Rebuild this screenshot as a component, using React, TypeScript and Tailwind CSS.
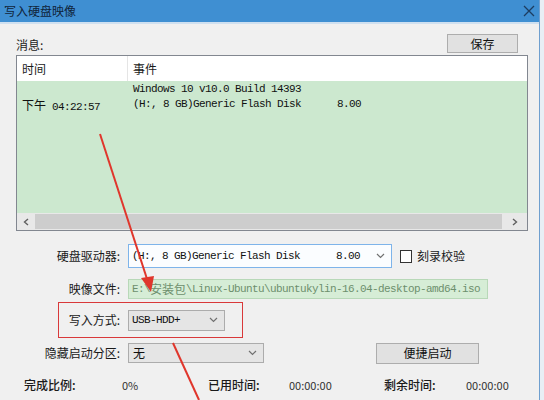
import React from 'react';

const cjk = "font-['Noto_Sans_CJK_SC',sans-serif]";
const mono = "font-['Liberation_Mono','Noto_Sans_CJK_SC',monospace] tracking-[-0.6px]";

function Chevron() {
  return (
    <svg width="9" height="6" viewBox="0 0 9 6" className="shrink-0">
      <path d="M1 1 L4.5 4.5 L8 1" fill="none" stroke="#707070" strokeWidth="1.2" />
    </svg>
  );
}

function Label({ children, w = 'w-[120px]' }: { children: React.ReactNode; w?: string }) {
  return <div className={`${w} shrink-0 text-right text-[12px] text-[#1a1a1a] ${cjk}`}>{children}</div>;
}

export default function App() {
  return (
    <div className="relative w-[544px] h-[400px] overflow-hidden bg-[#e8eef5] flex">
      <div className="w-[540px] h-full flex flex-col bg-[#f0f0f0] border-r border-[#6f9fcf]">
        {/* title bar */}
        <div className="h-[22px] bg-[#3f8fd2] flex items-center justify-between pl-[4px] pr-[4px]">
          <span className={`text-[12px] text-[#10243a] ${cjk}`}>写入硬盘映像</span>
          <svg width="12" height="12" viewBox="0 0 12 12">
            <path d="M1 1 L11 11 M11 1 L1 11" stroke="#1d3d60" strokeWidth="1.3" />
          </svg>
        </div>
        <div className="h-[2px] bg-[#cfe0f0]" />

        {/* message header */}
        <div className="flex items-end justify-between pl-[16px] pr-[21px] mt-[10px] h-[21px]">
          <span className={`text-[12px] text-[#1a1a1a] mb-[1px] ${cjk}`}>消息:</span>
          <div className={`w-[71px] h-[19px] mb-[2px] bg-[#e1e1e1] border border-[#adadad] flex items-center justify-center text-[12px] text-[#111] ${cjk}`}>保存</div>
        </div>

        {/* list */}
        <div className="ml-[16px] w-[512px] h-[176px] border border-[#828790] bg-white flex flex-col">
          <div className={`h-[25px] flex text-[12px] text-[#1a1a1a] ${cjk}`}>
            <div className="w-[111px] pl-[5px] flex items-center border-r border-[#e5e5e5]">时间</div>
            <div className="pl-[5px] flex items-center">事件</div>
          </div>
          <div className={`flex-1 bg-[#cce8cf] pt-[1px] text-[11px] leading-[15px] text-[#111] ${mono}`}>
            <div className="pl-[116px]">Windows 10 v10.0 Build 14393</div>
            <div className="flex">
              <div className="w-[111px] pl-[5px] whitespace-pre">
                <span className={`tracking-normal text-[12px] ${cjk}`}>下午</span> 04:22:57
              </div>
              <div className="pl-[5px] whitespace-pre">(H:, 8 GB)Generic Flash Disk      8.00</div>
            </div>
          </div>
          <div className="h-[17px] bg-[#e8e8e8] flex items-center">
            <div className="w-[18px] flex justify-center">
              <svg width="6" height="8" viewBox="0 0 6 8"><path d="M5 1 L1.5 4 L5 7" fill="none" stroke="#606060" strokeWidth="1.4" /></svg>
            </div>
            <div className="flex-1 h-[15px] bg-[#cdcdcd]" />
            <div className="w-[25px] flex justify-center">
              <svg width="6" height="8" viewBox="0 0 6 8"><path d="M1 1 L4.5 4 L1 7" fill="none" stroke="#606060" strokeWidth="1.4" /></svg>
            </div>
          </div>
        </div>

        {/* drive row */}
        <div className="flex items-center mt-[13px] h-[24px]">
          <Label>硬盘驱动器:</Label>
          <div className={`ml-[8px] w-[264px] h-[24px] border border-[#7eb4ea] bg-[#fbfdff] flex items-center justify-between pl-[3px] pr-[6px] text-[11px] text-[#111] ${mono}`}>
            <span className="whitespace-pre">(H:, 8 GB)Generic Flash Disk      8.00</span>
            <Chevron />
          </div>
          <div className="ml-[8px] w-[12px] h-[13px] border border-[#333] bg-white" />
          <span className={`ml-[5px] text-[12px] text-[#1a1a1a] ${cjk}`}>刻录校验</span>
        </div>

        {/* image file */}
        <div className="flex items-center mt-[11px] h-[20px]">
          <Label>映像文件:</Label>
          <div className={`ml-[8px] w-[360px] h-[20px] border border-[#b8d8b8] bg-[#d6edd6] flex items-center pl-[3px] text-[11px] text-[#6d8f6d] whitespace-pre ${mono}`}>
            E:\<span className={`tracking-normal text-[12px] ${cjk}`}>安装包</span>\Linux-Ubuntu\ubuntukylin-16.04-desktop-amd64.iso
          </div>
        </div>

        {/* write mode (highlighted) */}
        <div className="ml-[58px] mt-[3px] w-[185px] h-[36px] border border-[#d9393a] flex items-center">
          <Label w="w-[61px]">写入方式:</Label>
          <div className={`ml-[8px] w-[97px] h-[21px] border border-[#acacac] bg-[#e5e5e5] flex items-center justify-between pl-[3px] pr-[6px] text-[11px] text-[#111] ${mono}`}>
            <span>USB-HDD+</span>
            <Chevron />
          </div>
        </div>

        {/* hidden partition */}
        <div className="flex items-center mt-[5px] h-[20px]">
          <Label>隐藏启动分区:</Label>
          <div className={`ml-[8px] w-[136px] h-[20px] border border-[#acacac] bg-[#e5e5e5] flex items-center justify-between pl-[4px] pr-[6px] text-[12px] text-[#111] ${cjk}`}>
            <span>无</span>
            <Chevron />
          </div>
          <div className={`ml-[112px] w-[103px] h-[21px] border border-[#adadad] bg-[#e1e1e1] flex items-center justify-center text-[12px] text-[#111] ${cjk}`}>便捷启动</div>
        </div>

        {/* status row */}
        <div className={`flex items-center mt-[12px] h-[20px] text-[12px] text-[#1a1a1a] ${cjk}`}>
          <span className="ml-[24px] w-[98px] font-medium">完成比例:</span>
          <span className="w-[86px] text-[11px] text-[#333]">0%</span>
          <span className="w-[81px] font-medium">已用时间:</span>
          <span className="w-[95px] text-[11px] text-[#333]">00:00:00</span>
          <span className="w-[82px] font-medium">剩余时间:</span>
          <span className="text-[11px] text-[#333]">00:00:00</span>
        </div>
      </div>

      {/* annotation arrows */}
      <svg className="absolute inset-0 pointer-events-none" width="544" height="400" viewBox="0 0 544 400">
        <line x1="100" y1="134" x2="148" y2="282" stroke="#e0362c" strokeWidth="2" />
        <path d="M141 278 L151 292 L154 276 Z" fill="#e0362c" />
        <line x1="173" y1="343" x2="199" y2="400" stroke="#e0362c" strokeWidth="2" />
      </svg>
    </div>
  );
}
